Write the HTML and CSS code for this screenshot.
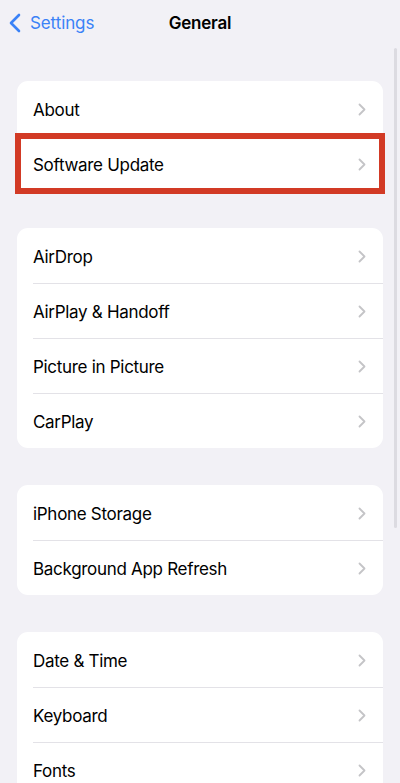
FILE: index.html
```html
<!DOCTYPE html>
<html>
<head>
<meta charset="utf-8">
<link rel="stylesheet" href="styles.css">
</head>
<body>
<div class="screen">
  <header class="nav">
    <div class="back">
      <svg class="back-icon" width="13" height="20" viewBox="0 0 13 20"><path d="M11 2 L3 10 L11 18" fill="none" stroke="#3a82f7" stroke-width="2.6" stroke-linecap="round" stroke-linejoin="round"/></svg>
      <span class="back-label">Settings</span>
    </div>
    <div class="title">General</div>
  </header>
  <main class="content">
    <section class="card first">
      <div class="row"><span class="label">About</span><svg class="chev" width="8" height="13" viewBox="0 0 8 13"><path d="M1.5 1.5 L6.5 6.5 L1.5 11.5" fill="none" stroke="#c4c4c7" stroke-width="1.8" stroke-linecap="round" stroke-linejoin="round"/></svg></div>
      <div class="row"><span class="label">Software Update</span><svg class="chev" width="8" height="13" viewBox="0 0 8 13"><path d="M1.5 1.5 L6.5 6.5 L1.5 11.5" fill="none" stroke="#c4c4c7" stroke-width="1.8" stroke-linecap="round" stroke-linejoin="round"/></svg></div>
      <div class="highlight"></div>
    </section>
    <section class="card">
      <div class="row"><span class="label">AirDrop</span><svg class="chev" width="8" height="13" viewBox="0 0 8 13"><path d="M1.5 1.5 L6.5 6.5 L1.5 11.5" fill="none" stroke="#c4c4c7" stroke-width="1.8" stroke-linecap="round" stroke-linejoin="round"/></svg></div>
      <div class="row"><span class="label">AirPlay &amp; Handoff</span><svg class="chev" width="8" height="13" viewBox="0 0 8 13"><path d="M1.5 1.5 L6.5 6.5 L1.5 11.5" fill="none" stroke="#c4c4c7" stroke-width="1.8" stroke-linecap="round" stroke-linejoin="round"/></svg></div>
      <div class="row"><span class="label">Picture in Picture</span><svg class="chev" width="8" height="13" viewBox="0 0 8 13"><path d="M1.5 1.5 L6.5 6.5 L1.5 11.5" fill="none" stroke="#c4c4c7" stroke-width="1.8" stroke-linecap="round" stroke-linejoin="round"/></svg></div>
      <div class="row"><span class="label">CarPlay</span><svg class="chev" width="8" height="13" viewBox="0 0 8 13"><path d="M1.5 1.5 L6.5 6.5 L1.5 11.5" fill="none" stroke="#c4c4c7" stroke-width="1.8" stroke-linecap="round" stroke-linejoin="round"/></svg></div>
    </section>
    <section class="card">
      <div class="row"><span class="label">iPhone Storage</span><svg class="chev" width="8" height="13" viewBox="0 0 8 13"><path d="M1.5 1.5 L6.5 6.5 L1.5 11.5" fill="none" stroke="#c4c4c7" stroke-width="1.8" stroke-linecap="round" stroke-linejoin="round"/></svg></div>
      <div class="row"><span class="label">Background App Refresh</span><svg class="chev" width="8" height="13" viewBox="0 0 8 13"><path d="M1.5 1.5 L6.5 6.5 L1.5 11.5" fill="none" stroke="#c4c4c7" stroke-width="1.8" stroke-linecap="round" stroke-linejoin="round"/></svg></div>
    </section>
    <section class="card last">
      <div class="row"><span class="label">Date &amp; Time</span><svg class="chev" width="8" height="13" viewBox="0 0 8 13"><path d="M1.5 1.5 L6.5 6.5 L1.5 11.5" fill="none" stroke="#c4c4c7" stroke-width="1.8" stroke-linecap="round" stroke-linejoin="round"/></svg></div>
      <div class="row"><span class="label">Keyboard</span><svg class="chev" width="8" height="13" viewBox="0 0 8 13"><path d="M1.5 1.5 L6.5 6.5 L1.5 11.5" fill="none" stroke="#c4c4c7" stroke-width="1.8" stroke-linecap="round" stroke-linejoin="round"/></svg></div>
      <div class="row"><span class="label">Fonts</span><svg class="chev" width="8" height="13" viewBox="0 0 8 13"><path d="M1.5 1.5 L6.5 6.5 L1.5 11.5" fill="none" stroke="#c4c4c7" stroke-width="1.8" stroke-linecap="round" stroke-linejoin="round"/></svg></div>
      <div class="row empty"></div>
    </section>
  </main>
  <div class="scrollbar"></div>
</div>
</body>
</html>
```
FILE: styles.css
```css
html, body {
  margin: 0;
  padding: 0;
}
body {
  background: #f2f1f6;
  font-family: Inter, "Liberation Sans", sans-serif;
  color: #000;
  -webkit-font-smoothing: antialiased;
}
.screen {
  position: relative;
  width: 400px;
  height: 783px;
  overflow: hidden;
}
.nav {
  position: relative;
  height: 44px;
  padding-top: 1px;
  box-sizing: border-box;
  display: flex;
  align-items: center;
  justify-content: center;
}
.back {
  position: absolute;
  left: 8px;
  top: 1px;
  height: 43px;
  display: flex;
  align-items: center;
  gap: 9px;
}
.back-label {
  color: #3a82f7;
  font-size: 17px;
  letter-spacing: -0.1px;
}
.title {
  font-size: 17px;
  font-weight: 600;
  letter-spacing: -0.2px;
}
.content {
  padding: 37px 17px 0 17px;
  display: flex;
  flex-direction: column;
  gap: 37px;
}
.card {
  position: relative;
  background: #fff;
  border-radius: 11px;
}
.row {
  height: 55px;
  box-sizing: border-box;
  padding: 2px 17px 0 16px;
  display: flex;
  align-items: center;
  justify-content: space-between;
  position: relative;
}
.row + .row::before {
  content: "";
  position: absolute;
  left: 16px;
  right: 0;
  top: -0.5px;
  height: 1px;
  background: #e3e2e7;
}
.label {
  font-size: 17px;
  letter-spacing: -0.3px;
}
.chev {
  display: block;
}
.highlight {
  position: absolute;
  left: -2px;
  right: -2px;
  top: 52px;
  height: 61px;
  border: 6px solid #d23a25;
  box-sizing: border-box;
}
.scrollbar {
  position: absolute;
  right: 3px;
  top: 48px;
  width: 3px;
  height: 480px;
  border-radius: 2px;
  background: #dcdbe1;
}
```
